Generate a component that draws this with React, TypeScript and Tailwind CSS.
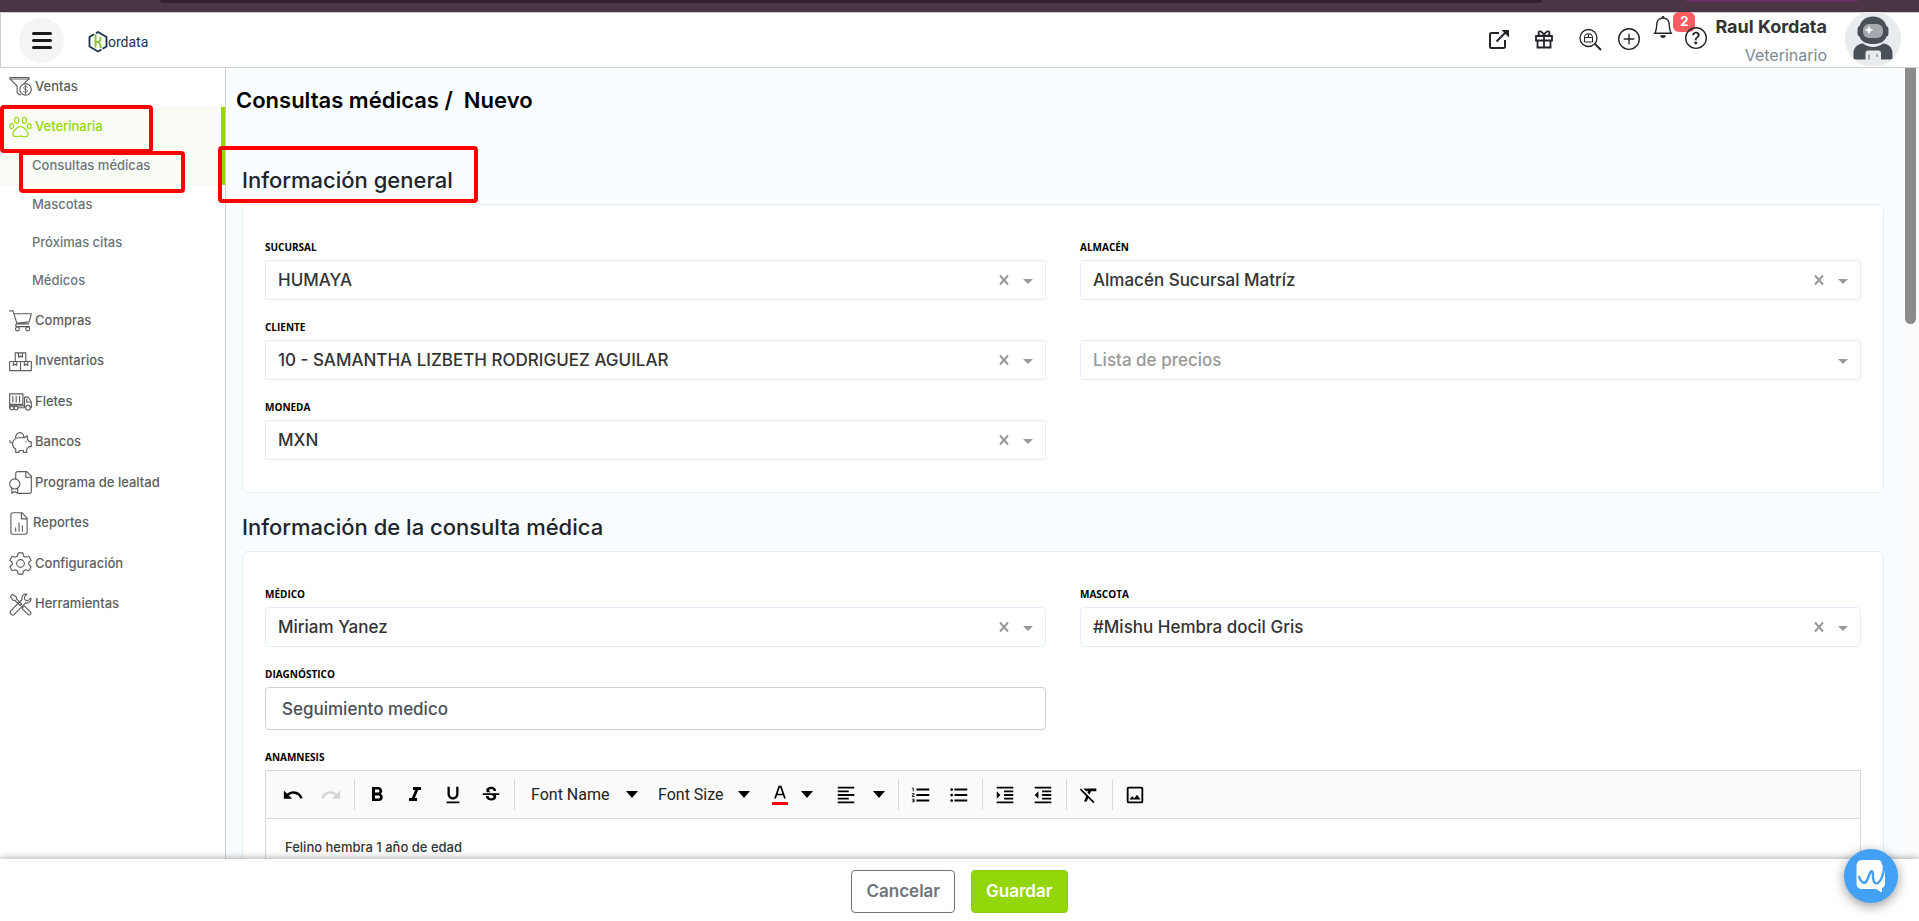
import React from 'react'
import {
  MdFormatAlignLeft,
  MdFormatBold,
  MdFormatClear,
  MdFormatIndentDecrease,
  MdFormatIndentIncrease,
  MdFormatItalic,
  MdFormatListBulleted,
  MdFormatListNumbered,
  MdFormatUnderlined,
  MdOutlineImage,
  MdRedo,
  MdStrikethroughS,
  MdUndo,
} from 'react-icons/md'
import { BsBell, BsPlusCircle, BsQuestionCircle } from 'react-icons/bs'

type IconProps = {
  children: React.ReactNode
  className?: string
  viewBox?: string
}

function Icon({ children, className = 'h-[23px] w-[23px]', viewBox = '0 0 24 24' }: IconProps) {
  return (
    <svg
      viewBox={viewBox}
      className={`shrink-0 ${className}`}
      fill="none"
      stroke="currentColor"
      strokeWidth="1.2"
      strokeLinejoin="round"
      strokeLinecap="round"
      aria-hidden="true"
    >
      {children}
    </svg>
  )
}

const icons = {
  ventas: (
    <Icon>
      <path d="M12 20.500h-1.500L8.500 18.500v-7L1 4V2.600h20V4l-5 4.500M1 4.200h20" />
      <circle cx="17.300" cy="15" r="6" />
      <path d="M19.200 13c-.4-.8-1.100-1.200-2-1.200-2.500 0-2.400 2.900 0 3.200 2.500.3 2.500 3.200 0 3.200-1 0-1.700-.4-2.100-1.200M17.200 10.700v8.600" strokeWidth="1" />
    </Icon>
  ),
  veterinaria: (
    <Icon>
      <ellipse cx="8" cy="4.500" rx="2.200" ry="3.200" />
      <ellipse cx="16" cy="4.500" rx="2.200" ry="3.200" />
      <ellipse cx="2.800" cy="10.500" rx="2" ry="2.600" />
      <ellipse cx="21.200" cy="10.500" rx="2" ry="2.600" />
      <path d="M12 11c-3.500 0-5 2.500-6.800 4.800-2 2.700-1.500 6.100 2 5.800 1.700-.2 3-.6 4.800-.6s3.100.4 4.800.6c3.500.3 4-3.100 2-5.800C17 13.500 15.500 11 12 11z" />
    </Icon>
  ),
  compras: (
    <Icon>
      <path d="M.7 2h3.500l4.200 13.500h12.400M5 5h18.300L21 13.500 8 15M8.400 15.500c-2 .4-2 2.700 0 2.900h13" />
      <circle cx="8.800" cy="20.800" r="2" />
      <circle cx="19.500" cy="20.800" r="2" />
    </Icon>
  ),
  inventarios: (
    <Icon>
      <path d="M6.500 3h11v9h-11zM.7 12h11.300v9.500H.7zM12 12h11.300v9.500H12zM10 3v4.500l2-1.200 2 1.200V3M4.500 12v4l1.800-1 1.800 1v-4M16 12v4l1.800-1 1.800 1v-4" />
    </Icon>
  ),
  fletes: (
    <Icon>
      <path d="M.7 4h13.800v11H.7zM4 6.500v6M7.500 6.500v6M11 6.500v6M.7 15v3.500M9.500 18.500h7.500M.7 16.500h15.500M16.200 18.500V7.500h4l3.100 5v6h-1M18.500 9.500v3h4" />
      <circle cx="3" cy="18.800" r="2" />
      <circle cx="7.300" cy="18.800" r="2" />
      <circle cx="19.800" cy="18.500" r="2.400" />
    </Icon>
  ),
  bancos: (
    <Icon>
      <path d="M3.800 12.500c.6-3 3.200-5.500 6.200-5.500h6l3.200-2v3.500l2 2.800h2v5h-2.400l-2.300 2.500v3.500H15v-2h-4.500v2H7v-3.500c-2.200-1.300-3.400-3.800-3.200-6.300M3.800 12.500c-2 .2-3.300-1-2.800-2.800M7 7.800C6 .5 15.500-.5 15.500 6.500" />
      <path d="M17.800 11v.4" />
    </Icon>
  ),
  lealtad: (
    <Icon>
      <path d="M7 8V3c0-1.500.8-2.300 2-2.300h9.500L23.300 5.500V21c0 1.500-.8 2.300-2 2.300H9.500M17.500.7V6.500h5.800" />
      <circle cx="6" cy="13.500" r="5.300" />
      <path d="M3 18v5.300l3-1.800 3 1.800V18" />
    </Icon>
  ),
  reportes: (
    <Icon className="h-[23px] w-[21px]" viewBox="0 0 22 24">
      <path d="M2 3C2 1.500 2.800.7 4.200.7h9.300L19 6.500V21c0 1.500-.8 2.300-2.200 2.300H4.200C2.800 23.300 2 22.500 2 21zM13 .7v6.500h6M7 20v-3.500M10.500 20v-8.500M14 20v-5.500" />
    </Icon>
  ),
  configuracion: (
    <Icon>
      <circle cx="12" cy="12" r="4" />
      <path d="M9.600.9h4.800l.8 3.300 2.200 1.300 3.300-1 2.300 4.100L20.600 11v2l2.400 2.400-2.300 4.100-3.300-1-2.200 1.300-.8 3.300H9.600l-.8-3.300-2.200-1.300-3.300 1L1 15.400 3.400 13v-2L1 8.600l2.300-4.100 3.300 1 2.200-1.300z" />
    </Icon>
  ),
  herramientas: (
    <Icon>
      <path d="M1.500 3.500 3.500 1.500 7.500 4l.3 2.200 5.400 5.300-1.700 1.700-5.300-5.400L4 7.500zM14 15.500l2-2 6.300 6.200c1.700 1.700-1 4.500-2.700 2.700L13.500 16z" />
      <path d="M22.800 5.300c.6 3.500-2.500 6-5.500 5L5.500 22.300c-2.200 2-5.800-1.300-3.700-3.700L13.600 6.800c-1-3.500 1.700-6.300 5-5.600L16 4l.6 3.300L20 8z" />
    </Icon>
  ),
}

const subItems = ['Consultas médicas', 'Mascotas', 'Próximas citas', 'Médicos']

const lowerItems = [
  { label: 'Compras', icon: icons.compras },
  { label: 'Inventarios', icon: icons.inventarios },
  { label: 'Fletes', icon: icons.fletes },
  { label: 'Bancos', icon: icons.bancos },
  { label: 'Programa de lealtad', icon: icons.lealtad },
  { label: 'Reportes', icon: icons.reportes },
  { label: 'Configuración', icon: icons.configuracion },
  { label: 'Herramientas', icon: icons.herramientas },
]

function Logo() {
  return (
    <a href="#" className="flex items-center pt-1 text-[#17354a]" aria-label="kordata">
      <svg viewBox="0 0 20 22" className="h-[22px] w-5" fill="none" aria-hidden="true">
        <path d="M6 3.300 1.500 6v9.500L10 20.500l3.500-2M8 2.200 10 1l8.500 5v9.500l-4 2.300" stroke="#17354a" strokeWidth="1.800" />
        <path d="M7.500 3v13.500M7.500 11h2.300c2 0 2.800-1.500 2.800-5M9.800 11c2 .3 2.800 2 2.800 6" stroke="#8cc63f" strokeWidth="2" />
      </svg>
      <span className="font-['Roboto',sans-serif] text-[14px] leading-5">ordata</span>
    </a>
  )
}

function Avatar() {
  return (
    <svg viewBox="0 0 56 56" className="h-14 w-14" aria-hidden="true">
      <circle cx="28" cy="27" r="28" fill="#e9ecef" />
      <path d="M28 4.500c7 0 12 4 13.500 9.500 2 .5 2 2.500 2 5.500s0 4.500-2 5C40 29.500 35 32 28 32s-12-2.500-13.500-7.500c-2-.5-2-2-2-5s0-5 2-5.500C16 8.500 21 4.500 28 4.500z" fill="#495057" />
      <rect x="18" y="12" width="20" height="14" rx="6" fill="#a5a9ad" />
      <path d="M24 13.500l1.300 3.200 3.200 1.300-3.200 1.300L24 22.500l-1.300-3.200-3.200-1.300 3.200-1.300z" fill="#fff" />
      <path d="M18 31.500c5.500 4.500 14.500 4.500 20 0 6 .5 9.500 4.500 9.500 9.500v5.500c-1 .8-2 1-3 1h-33c-1 0-2-.2-3-1V41c0-5 3.500-9 9.500-9.500z" fill="#495057" />
      <path d="M20.500 48v-7c0-1.500 1-2.500 2.500-2.500h10.500c1.500 0 2.500 1 2.500 2.500v7z" fill="#e9ecef" />
      <path d="M24 42.500v5M32 42v3" stroke="#a5a9ad" strokeWidth="2" />
    </svg>
  )
}

function Header() {
  return (
    <header className="flex h-14 shrink-0 justify-between border border-r-0 border-[#cfcfcf] bg-white pl-[18px] pr-[18px]">
      <div className="flex items-center gap-6">
        <button aria-label="Menú" className="flex h-[45px] w-[45px] flex-col items-center justify-center gap-1 rounded-full bg-[#f4f4f4]">
          <span className="h-[3px] w-5 rounded-sm bg-[#1a1a1a]" />
          <span className="h-[3px] w-5 rounded-sm bg-[#1a1a1a]" />
          <span className="h-[3px] w-5 rounded-sm bg-[#1a1a1a]" />
        </button>
        <Logo />
      </div>
      <div className="flex items-start text-[#212529]">
        <div className="flex items-center pt-[14px]">
          <button aria-label="Abrir" className="mr-6">
            <svg viewBox="0 0 22 22" className="h-[22px] w-[22px]" fill="none" stroke="currentColor" strokeWidth="2" aria-hidden="true">
              <path d="M11 5H3.500C2.500 5 2 5.500 2 6.500v12c0 1 .5 1.500 1.500 1.500h12c1 0 1.500-.5 1.500-1.500V12M8.500 13.500 18.500 3.500" />
              <path d="M13.500 2H21v7.500z" fill="currentColor" stroke="none" />
            </svg>
          </button>
          <button aria-label="Promociones" className="mr-6">
            <svg viewBox="0 0 20 20" className="h-5 w-5" fill="none" stroke="currentColor" strokeWidth="1.800" aria-hidden="true">
              <path d="M2 7h16v4.500H2zM3.500 11.500v7h13v-7M10 7v11.500M10 6.500C8.500 2 4.500 1 4.500 4c0 2 1.500 3 3 3M10 6.500c1.500-4.500 5.500-5.500 5.500-2.500 0 2-1.500 3-3 3" />
            </svg>
          </button>
          <button aria-label="Buscar documento" className="mr-4">
            <svg viewBox="0 0 24 24" className="h-6 w-6" fill="none" stroke="currentColor" strokeWidth="1.300" aria-hidden="true">
              <circle cx="10.500" cy="11" r="8.500" />
              <path d="M17 17l6 6" strokeWidth="2" />
              <path d="M6.500 9.500 8 7h5l1.500 2.500V15h-8zM6.500 10.500h8M10.500 7v3.500" strokeWidth="1" />
            </svg>
          </button>
          <button aria-label="Agregar">
            <BsPlusCircle size={22} />
          </button>
        </div>
        <button aria-label="Notificaciones" className="relative ml-3 mt-[3px]">
          <BsBell size={22} />
          <span className="absolute -top-1 left-[21px] flex h-5 w-[22px] items-center justify-center rounded-md bg-[#ff5b61] text-[13px] font-bold text-white">
            2
          </span>
        </button>
        <button aria-label="Ayuda" className="relative ml-[11px] mt-[14px]">
          <BsQuestionCircle size={22} />
        </button>
        <div className="ml-2 pt-1 text-right">
          <p className="text-lg font-bold leading-5 text-[#333]">Raul Kordata</p>
          <p className="mt-2 text-base leading-5 text-[#7b8896]">Veterinario</p>
        </div>
        <div className="-mt-px ml-[18px] h-[54px] overflow-hidden">
          <Avatar />
        </div>
      </div>
    </header>
  )
}

function Sidebar() {
  return (
    <nav className="w-[226px] shrink-0 border-r border-[#cfcfcf] bg-white text-[13px] font-medium text-[#5b5e61]">
      <a href="#" className="flex h-[39px] items-center gap-[3px] pb-[2px] pl-[9px]">
        {icons.ventas}
        Ventas
      </a>
      <div className="border-r-4 border-[#93d70b] bg-[#f9fcf5]">
        <a href="#" className="flex h-10 items-center gap-[3px] pl-[9px] text-[#93d70b]">
          {icons.veterinaria}
          Veterinaria
        </a>
        <a href="#" className="flex h-[38px] items-center pl-8 text-[#6c757d]">
          {subItems[0]}
        </a>
      </div>
      <ul className="pt-px text-[#6c757d]">
        {subItems.slice(1).map((label) => (
          <li key={label}>
            <a href="#" className="flex h-[38px] items-center pl-8">
              {label}
            </a>
          </li>
        ))}
      </ul>
      <ul>
        {lowerItems.map(({ label, icon }) => (
          <li key={label} className="h-[41px] even:h-10">
            <a href="#" className="flex h-full items-center gap-[3px] pl-[9px]">
              {icon}
              {label}
            </a>
          </li>
        ))}
      </ul>
    </nav>
  )
}

const labelClass = "mb-1 block h-[18px] font-['Open_Sans',sans-serif] text-[10px] font-bold uppercase leading-[18px] text-black"

type SelectFieldProps = {
  id: string
  label?: string
  value: string
}

function SelectField({ id, label, value }: SelectFieldProps) {
  return (
    <div>
      {label ? (
        <label htmlFor={id} className={labelClass}>
          {label}
        </label>
      ) : (
        <div className="mb-1 h-[18px]" />
      )}
      <div className="relative">
        <select
          id={id}
          aria-label={label ?? value}
          className={`h-10 w-full appearance-none rounded border border-[#e3eefa] bg-white pl-3 pt-[2px] text-[17px] font-medium ${label ? 'text-[#333]' : 'text-[#999]'}`}
        >
          <option>{value}</option>
        </select>
        {label && (
          <button aria-label="Limpiar" className="absolute right-9 top-[14px] text-[#999]">
            <svg viewBox="0 0 12 12" className="h-3 w-3" stroke="currentColor" strokeWidth="2" aria-hidden="true">
              <path d="M2 1.500 10 10.500M10 1.500 2 10.500" />
            </svg>
          </button>
        )}
        <span className="pointer-events-none absolute right-[13px] top-[19px] border-x-[5px] border-t-[5px] border-x-transparent border-t-[#999]" />
      </div>
    </div>
  )
}

function ToolButton({ label, children }: { label: string; children: React.ReactNode }) {
  return (
    <button aria-label={label} className="flex h-9 w-[38px] items-center justify-center disabled:text-[#d5d5d5]" disabled={label === 'Rehacer'}>
      {children}
    </button>
  )
}

function Caret() {
  return <span className="block border-x-[6px] border-t-[7px] border-x-transparent border-t-black" />
}

function Separator() {
  return <span className="ml-1 mr-[3px] h-[31px] w-px bg-[#d9d9d9]" />
}

function Editor() {
  return (
    <div className="border border-[#d9d9d9]">
      <div className="flex h-12 items-center border-b border-[#d9d9d9] bg-[#fafafa] pl-2 text-black">
        <ToolButton label="Deshacer"><MdUndo size={22} /></ToolButton>
        <ToolButton label="Rehacer"><MdRedo size={22} /></ToolButton>
        <Separator />
        <ToolButton label="Negrita"><MdFormatBold size={24} /></ToolButton>
        <ToolButton label="Cursiva"><MdFormatItalic size={24} /></ToolButton>
        <ToolButton label="Subrayado"><MdFormatUnderlined size={22} /></ToolButton>
        <ToolButton label="Tachado"><MdStrikethroughS size={22} /></ToolButton>
        <Separator />
        <div className="relative ml-[9px] flex items-center">
          <select aria-label="Font Name" className="h-9 w-[119px] appearance-none bg-transparent pl-1 font-['Roboto',sans-serif] text-base text-[#222]">
            <option>Font Name</option>
          </select>
          <span className="pointer-events-none absolute right-2"><Caret /></span>
        </div>
        <div className="relative ml-2 flex items-center">
          <select aria-label="Font Size" className="h-9 w-[104px] appearance-none bg-transparent pl-1 font-['Roboto',sans-serif] text-base text-[#222]">
            <option>Font Size</option>
          </select>
          <span className="pointer-events-none absolute right-2"><Caret /></span>
        </div>
        <button aria-label="Color de texto" className="ml-[14px] flex items-center gap-[13px]">
          <svg viewBox="0 0 16 22" className="h-[22px] w-4" fill="none" aria-hidden="true">
            <path d="M3 14.500 7.200 2.500h1.600L13 14.500M4.600 10.500h6.800" stroke="#000" strokeWidth="1.700" />
            <path d="M0 18h16v3H0z" fill="#f00" />
          </svg>
          <Caret />
        </button>
        <button aria-label="Alinear" className="ml-[22px] mr-[9px] flex items-center gap-4">
          <MdFormatAlignLeft size={22} />
          <Caret />
        </button>
        <Separator />
        <ToolButton label="Lista numerada"><MdFormatListNumbered size={22} /></ToolButton>
        <ToolButton label="Lista"><MdFormatListBulleted size={22} /></ToolButton>
        <Separator />
        <ToolButton label="Aumentar sangría"><MdFormatIndentIncrease size={22} /></ToolButton>
        <ToolButton label="Reducir sangría"><MdFormatIndentDecrease size={22} /></ToolButton>
        <Separator />
        <ToolButton label="Borrar formato"><MdFormatClear size={22} /></ToolButton>
        <Separator />
        <ToolButton label="Imagen"><MdOutlineImage size={22} /></ToolButton>
      </div>
      <div className="min-h-40 bg-white px-[19px] pt-[18px] text-[13px] font-medium leading-5 text-[#333]">
        Felino hembra 1 año de edad
      </div>
    </div>
  )
}

export default function App() {
  return (
    <div className="relative flex h-screen flex-col overflow-hidden bg-white font-['Inter',sans-serif]">
      <div className="flex h-3 shrink-0 items-start bg-[#4b3545]">
        <span className="ml-40 h-[3px] w-[72%] rounded-b-full bg-[#331f2f]" />
        <span className="ml-36 h-[2px] w-[9%] rounded-b-full bg-[#6b3068]" />
      </div>
      <Header />

      <div className="flex min-h-0 flex-1">
        <Sidebar />
        <main className="min-w-0 flex-1 overflow-hidden bg-[#f9fdff] pl-4 pr-[19px]">
          <h1 className="-ml-1.5 pt-[18px] text-[22px] font-semibold leading-7 text-black">
            Consultas médicas /&nbsp; Nuevo
          </h1>

          <h2 className="mt-[52px] text-[22px] font-medium leading-7 text-[#212529]">Información general</h2>
          <section className="mt-[10px] grid grid-cols-2 gap-x-[34px] gap-y-[18px] rounded-md border border-[#e3eefa] bg-white px-[22px] pb-8 pt-[33px]">
            <SelectField id="sucursal" label="Sucursal" value="HUMAYA" />
            <SelectField id="almacen" label="Almacén" value="Almacén Sucursal Matríz" />
            <SelectField id="cliente" label="Cliente" value="10 - SAMANTHA LIZBETH RODRIGUEZ AGUILAR" />
            <SelectField id="precios" value="Lista de precios" />
            <SelectField id="moneda" label="Moneda" value="MXN" />
          </section>

          <h2 className="mt-5 text-[22px] font-medium leading-7 text-[#212529]">Información de la consulta médica</h2>
          <section className="mt-[10px] grid grid-cols-2 gap-x-[34px] gap-y-[18px] rounded-md border border-[#e3eefa] bg-white px-[22px] pb-8 pt-[33px]">
            <SelectField id="medico" label="Médico" value="Miriam Yanez" />
            <SelectField id="mascota" label="Mascota" value="#Mishu Hembra docil Gris" />
            <div>
              <label htmlFor="diagnostico" className={labelClass}>
                Diagnóstico
              </label>
              <input
                id="diagnostico"
                defaultValue="Seguimiento medico"
                className="h-[43px] w-full rounded border border-[#ced0da] bg-white px-4 text-[17px] font-medium text-[#495057]"
              />
            </div>
            <div className="col-span-2">
              <p className={labelClass}>Anamnesis</p>
              <Editor />
            </div>
          </section>
        </main>
        <div className="w-4 shrink-0 bg-[#fbfbfb] pl-[2px]">
          <div className="h-64 w-[11px] rounded-b-full bg-[#8b8b8b]" />
        </div>
      </div>

      <footer className="relative flex h-[62px] shrink-0 justify-center gap-4 bg-white pt-[11px] shadow-[0_0_8px_rgba(0,0,0,0.4)]">
        <button className="h-[43px] rounded border border-[#6c757d] px-[14px] text-[17px] font-semibold text-[#6c757d]">Cancelar</button>
        <button className="h-[43px] rounded border border-[#8bcc0a] bg-[#93d70b] px-[14px] text-[17px] font-semibold text-white">Guardar</button>
      </footer>

      <button aria-label="Chat" className="absolute bottom-[18px] right-[21px] flex h-[54px] w-[54px] items-center justify-center rounded-full bg-[#42a1f5] shadow-[0_3px_12px_rgba(0,0,0,0.4)]">
        <svg viewBox="0 0 32 34" className="h-[34px] w-8" fill="none" aria-hidden="true">
          <path d="M8 1h14c4 0 5 2 5 5l3 1v17c0 3-1 4.500-3 5v4.500L21 30H8c-4.500 0-6.500-2-6.500-6V8C1.500 3.500 3 1 8 1z" fill="#fff" />
          <path d="M4 18c3 7 6.500 8 9 1 2.500-7.500 5-9.500 5-2 0 9 4.500 9 7.500 4 2.500-4 3.500-9 3.500-14" stroke="#42a1f5" strokeWidth="2.400" strokeLinecap="round" />
        </svg>
      </button>

      {/* callouts over the menu entries and the first section title */}
      <span className="pointer-events-none absolute left-0 top-[105px] h-12 w-[153px] rounded-sm border-4 border-[#f00]" />
      <span className="pointer-events-none absolute left-[19px] top-[151px] h-[42px] w-[166px] rounded-sm border-4 border-[#f00]" />
      <span className="pointer-events-none absolute left-[218px] top-[146px] h-[57px] w-[260px] rounded-sm border-4 border-[#f00]" />
    </div>
  )
}
